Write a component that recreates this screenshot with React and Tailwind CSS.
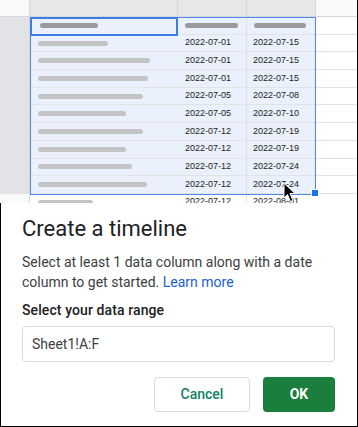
const rows = [
  { a: 70, b: "2022-07-01", c: "2022-07-15" },
  { a: 112, b: "2022-07-01", c: "2022-07-15" },
  { a: 110, b: "2022-07-01", c: "2022-07-15" },
  { a: 105, b: "2022-07-05", c: "2022-07-08" },
  { a: 88, b: "2022-07-05", c: "2022-07-10" },
  { a: 105, b: "2022-07-12", c: "2022-07-19" },
  { a: 88, b: "2022-07-12", c: "2022-07-19" },
  { a: 94, b: "2022-07-12", c: "2022-07-24" },
  { a: 109, b: "2022-07-12", c: "2022-07-24" },
];

const Bar = ({ width, dark }) => (
  <div
    className={`h-[5px] rounded-full ${dark ? "bg-[#9a9a9a]" : "bg-[#c4c4c4]"}`}
    style={{ width }}
  />
);

const Row = ({ selected, first, children }) => (
  <div className="grid grid-cols-[30px_148px_69px_69px_1fr] h-[17.7px] border-b border-[#e2e3e3]">
    <div
      className={`border-r border-[#d5d7da] ${
        selected ? "bg-[#e1e3e6]" : "bg-[#f8f9fa]"
      }`}
    />
    {children}
    <div className={first ? "" : ""} />
  </div>
);

const Sheet = () => (
  <div className="relative h-[203px] overflow-hidden bg-white font-['Liberation_Sans',Arial,sans-serif] text-[9px] text-[#222]">
    {/* column headers */}
    <div className="grid grid-cols-[30px_148px_69px_69px_1fr] h-[17px] border-b border-[#d5d7da]">
      <div className="bg-[#f8f9fa] border-r border-[#d5d7da]" />
      <div className="bg-[#e6e7e9] border-r border-[#d5d7da]" />
      <div className="bg-[#e6e7e9] border-r border-[#d5d7da]" />
      <div className="bg-[#e6e7e9] border-r border-[#d5d7da]" />
      <div className="bg-[#f8f9fa]" />
    </div>

    {/* row 1: headings */}
    <Row selected first>
      <div className="flex items-center pl-[10px] bg-[#eaf1fd]">
        <Bar width={58} dark />
      </div>
      <div className="flex items-center pl-[7px] bg-[#eaf1fd] border-r border-[#d9dfe8]">
        <Bar width={53} dark />
      </div>
      <div className="flex items-center pl-[7px] bg-[#eaf1fd]">
        <Bar width={52} dark />
      </div>
    </Row>

    {rows.map((r, i) => (
      <Row key={i} selected>
        <div className="flex items-center pl-[8px] bg-[#eaf1fd]">
          <Bar width={r.a} />
        </div>
        <div className="flex items-center pl-[7px] bg-[#eaf1fd] border-r border-[#d9dfe8]">
          {r.b}
        </div>
        <div className="flex items-center pl-[6px] bg-[#eaf1fd]">{r.c}</div>
      </Row>
    ))}

    <Row>
      <div className="flex items-center pl-[8px]">
        <Bar width={55} />
      </div>
      <div className="flex items-center pl-[7px] border-r border-[#e2e3e3]">
        2022-07-12
      </div>
      <div className="flex items-center pl-[6px]">2022-08-01</div>
    </Row>

    {/* selection range */}
    <div className="absolute left-[30px] top-[17px] w-[286px] h-[178px] border border-[#4a89ea] pointer-events-none" />
    {/* active cell */}
    <div className="absolute left-[30px] top-[17px] w-[148px] h-[19px] border-2 border-[#3b7fe6] pointer-events-none" />
    {/* fill handle */}
    <div className="absolute left-[311px] top-[189px] w-[8px] h-[8px] bg-[#1a73e8] border border-white" />
    {/* mouse pointer */}
    <svg
      className="absolute left-[283px] top-[182px]"
      width="15"
      height="21"
      viewBox="0 0 15 21"
    >
      <path
        d="M1 1 L1 16 L4.5 12.5 L7.5 19.5 L10 18.5 L7 11.5 L12 11.5 Z"
        fill="#000"
        stroke="#fff"
        strokeWidth="1"
        strokeLinejoin="round"
      />
    </svg>
  </div>
);

export default function App() {
  return (
    <div className="w-[358px] h-[427px] bg-white border-r border-black flex flex-col overflow-hidden font-['Roboto','Noto_Sans',sans-serif]">
      <Sheet />
      <div className="flex-1 border-l border-b border-black bg-white px-[21px] pt-[12px]">
        <h1 className="text-[22px] leading-[28px] text-[#202124]">
          Create a timeline
        </h1>
        <p className="mt-[9px] text-[14px] leading-[20px] text-[#3c4043]">
          Select at least 1 data column along with a date column to get
          started. <span className="text-[#1a5fd1]">Learn more</span>
        </p>
        <div className="mt-[8px] text-[14px] leading-[20px] text-[#202124] font-medium tracking-[0.1px]">
          Select your data range
        </div>
        <div className="mt-[6px] h-[36px] w-[313px] rounded-[4px] border border-[#dadce0] flex items-center px-[9px] text-[14px] text-[#3c4043]">
          Sheet1!A:F
        </div>
        <div className="mt-[15px] flex justify-end gap-[13px] pr-[1px]">
          <button className="h-[35px] w-[96px] rounded-[4px] border border-[#dadce0] bg-white text-[14px] font-medium text-[#137f6b]">
            Cancel
          </button>
          <button className="h-[35px] w-[72px] rounded-[4px] bg-[#1a7f3c] text-[14px] font-bold text-white">
            OK
          </button>
        </div>
      </div>
    </div>
  );
}
